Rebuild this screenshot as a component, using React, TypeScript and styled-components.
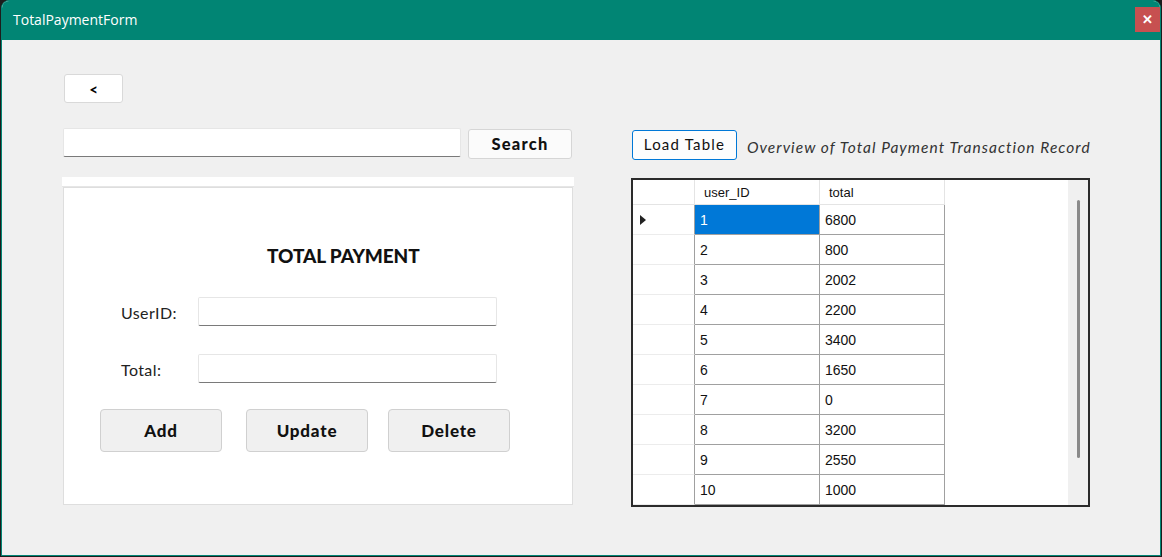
import React from "react";
import styled, { createGlobalStyle } from "styled-components";

const Global = createGlobalStyle`
  html, body { margin: 0; padding: 0; background: #1c1c1c; }
  body { width: 1162px; height: 557px; overflow: hidden; }
  * { box-sizing: border-box; }
`;

const TEAL = "#018574";
const GOTHIC = `"Lato", "DejaVu Sans", sans-serif`;
const UI = `"Liberation Sans", Arial, sans-serif`;

const Window = styled.div`
  margin-left: 1px;
  width: 1160px;
  height: 556px;
  border: 1px solid ${TEAL};
  border-radius: 8px 8px 0 0;
  overflow: hidden;
  background: #f0f0f0;
  display: flex;
  flex-direction: column;
`;

const TitleBar = styled.div`
  height: 39px;
  flex: none;
  background: ${TEAL};
  display: flex;
  align-items: center;
  justify-content: space-between;
  padding-left: 11px;
  padding-right: 0;
`;

const Title = styled.span`
  color: #fff;
  font-family: "Open Sans", "Noto Sans", sans-serif;
  font-size: 14px;
  margin-top: -2px;
`;

const CloseBtn = styled.div`
  width: 25px;
  height: 25px;
  background: #c75050;
  color: #fff;
  font-family: ${UI};
  font-weight: bold;
  font-size: 13px;
  display: flex;
  align-items: center;
  justify-content: center;
  margin-top: -3px;
`;

const Body = styled.div`
  flex: 1;
  display: flex;
  padding: 34px 0 0 60px;
`;

const LeftCol = styled.div`
  width: 512px;
  display: flex;
  flex-direction: column;
`;

const BackButton = styled.button`
  margin-left: 2px;
  width: 59px;
  height: 29px;
  background: #fff;
  border: 1px solid #d9d9d9;
  border-radius: 3px;
  font-family: ${GOTHIC};
  font-weight: 900;
  font-size: 15px;
  color: #000;
  padding: 0;
`;

const SearchRow = styled.div`
  margin-top: 25px;
  display: flex;
  align-items: flex-start;
  margin-left: 1px;
`;

const TextBox = styled.div<{ w: number }>`
  width: ${(p) => p.w}px;
  height: 29px;
  background: #fff;
  border: 1px solid #e6e6e6;
  border-bottom: 1px solid #7a7a7a;
  border-radius: 2px;
`;

const SearchButton = styled.button`
  margin-left: 7px;
  margin-top: 1px;
  width: 104px;
  height: 30px;
  background: #fbfbfb;
  border: 1px solid #d6d6d6;
  border-radius: 3px;
  font-family: ${GOTHIC};
  font-weight: 900;
  font-size: 16.5px;
  letter-spacing: 1.2px;
  color: #111;
  padding: 0 0 1px;
`;

const Strip = styled.div`
  margin-top: 18px;
  height: 10px;
  background: #fff;
  border-bottom: 1px solid #e6e6e6;
`;

const Panel = styled.div`
  margin-left: 1px;
  width: 510px;
  height: 318px;
  background: #fff;
  border: 1px solid #dedede;
  display: flex;
  flex-direction: column;
`;

const Heading = styled.div`
  margin: 56px 0 0 203px;
  font-family: ${GOTHIC};
  font-weight: 900;
  font-size: 19px;
  letter-spacing: -0.1px;
  color: #111;
  line-height: 24px;
`;

const FormRow = styled.div<{ top: number }>`
  margin-top: ${(p) => p.top}px;
  display: flex;
  align-items: center;
  padding-left: 57px;
`;

const Label = styled.span`
  width: 77px;
  font-family: ${GOTHIC};
  font-size: 16px;
  letter-spacing: 0.4px;
  color: #222;
  padding-top: 2px;
`;

const ButtonRow = styled.div`
  margin-top: 26px;
  display: flex;
  padding-left: 36px;
`;

const ActionButton = styled.button<{ gap: number }>`
  margin-left: ${(p) => p.gap}px;
  width: 122px;
  height: 43px;
  background: #f0f0f0;
  border: 1px solid #d0d0d0;
  border-radius: 4px;
  font-family: ${GOTHIC};
  font-weight: 900;
  font-size: 17px;
  letter-spacing: 0.8px;
  color: #111;
  padding: 0;
`;

const RightCol = styled.div`
  margin-left: 57px;
  padding-top: 56px;
  display: flex;
  flex-direction: column;
`;

const LoadRow = styled.div`
  display: flex;
  align-items: center;
`;

const LoadButton = styled.button`
  margin-left: 1px;
  width: 105px;
  height: 30px;
  background: #fdfdfd;
  border: 1px solid #0078d7;
  border-radius: 3px;
  font-family: ${GOTHIC};
  font-size: 15px;
  letter-spacing: 1.2px;
  color: #111;
  padding: 0 0 2px;
`;

const Caption = styled.span`
  margin-left: 10px;
  margin-top: 4px;
  font-family: ${GOTHIC};
  font-style: italic;
  font-size: 15.5px;
  letter-spacing: 1.05px;
  color: #333;
  white-space: nowrap;
`;

const Grid = styled.div`
  margin-top: 18px;
  width: 459px;
  height: 329px;
  border: 2px solid #2b2b2b;
  display: flex;
  background: #fff;
  overflow: hidden;
`;

const Columns = styled.div`
  width: 312px;
  display: flex;
  flex-direction: column;
`;

const Row = styled.div<{ header?: boolean }>`
  display: flex;
  height: ${(p) => (p.header ? 25 : 30)}px;
  flex: none;
`;

const RowHead = styled.div<{ header?: boolean }>`
  width: 62px;
  flex: none;
  background: #fff;
  border-bottom: 1px solid ${(p) => (p.header ? "#e4e4e4" : "#ececec")};
  border-right: 1px solid ${(p) => (p.header ? "#e4e4e4" : "#a0a0a0")};
  display: flex;
  align-items: center;
  padding-left: 7px;
`;

const Cell = styled.div<{ header?: boolean; selected?: boolean }>`
  width: 125px;
  flex: none;
  background: ${(p) => (p.selected ? "#0078d7" : "#fff")};
  color: ${(p) => (p.selected ? "#fff" : "#111")};
  border-right: 1px solid ${(p) => (p.header ? "#e4e4e4" : "#a0a0a0")};
  border-bottom: 1px solid ${(p) => (p.header ? "#e4e4e4" : "#a0a0a0")};
  font-family: ${UI};
  font-size: ${(p) => (p.header ? 13 : 14)}px;
  display: flex;
  align-items: center;
  padding-left: ${(p) => (p.header ? 9 : 5)}px;
  padding-top: 1px;
`;

const Blank = styled.div`
  flex: 1;
  background: #fff;
`;

const ScrollTrack = styled.div`
  width: 20px;
  flex: none;
  background: #f0f0f0;
  display: flex;
  justify-content: center;
  padding-top: 20px;
`;

const Thumb = styled.div`
  width: 3px;
  height: 258px;
  border-radius: 2px;
  background: #8a8a8a;
`;

const Arrow = () => (
  <svg width="6" height="10" viewBox="0 0 6 10">
    <path d="M0 0 L6 5 L0 10 Z" fill="#222" />
  </svg>
);

const data: [number, number][] = [
  [1, 6800],
  [2, 800],
  [3, 2002],
  [4, 2200],
  [5, 3400],
  [6, 1650],
  [7, 0],
  [8, 3200],
  [9, 2550],
  [10, 1000],
  [11, 0],
];

export default function App() {
  return (
    <>
      <Global />
      <Window>
        <TitleBar>
          <Title>TotalPaymentForm</Title>
          <CloseBtn>✕</CloseBtn>
        </TitleBar>
        <Body>
          <LeftCol>
            <BackButton>&lt;</BackButton>
            <SearchRow>
              <TextBox w={398} />
              <SearchButton>Search</SearchButton>
            </SearchRow>
            <Strip />
            <Panel>
              <Heading>TOTAL PAYMENT</Heading>
              <FormRow top={29}>
                <Label>UserID:</Label>
                <TextBox w={299} />
              </FormRow>
              <FormRow top={28}>
                <Label>Total:</Label>
                <TextBox w={299} />
              </FormRow>
              <ButtonRow>
                <ActionButton gap={0}>Add</ActionButton>
                <ActionButton gap={24}>Update</ActionButton>
                <ActionButton gap={20}>Delete</ActionButton>
              </ButtonRow>
            </Panel>
          </LeftCol>
          <RightCol>
            <LoadRow>
              <LoadButton>Load Table</LoadButton>
              <Caption>Overview of Total Payment Transaction Record</Caption>
            </LoadRow>
            <Grid>
              <Columns>
                <Row header>
                  <RowHead header />
                  <Cell header>user_ID</Cell>
                  <Cell header>total</Cell>
                </Row>
                {data.map(([id, total], i) => (
                  <Row key={id}>
                    <RowHead>{i === 0 ? <Arrow /> : null}</RowHead>
                    <Cell selected={i === 0}>{i < 10 ? id : ""}</Cell>
                    <Cell>{i < 10 ? total : ""}</Cell>
                  </Row>
                ))}
              </Columns>
              <Blank />
              <ScrollTrack>
                <Thumb />
              </ScrollTrack>
            </Grid>
          </RightCol>
        </Body>
      </Window>
    </>
  );
}
